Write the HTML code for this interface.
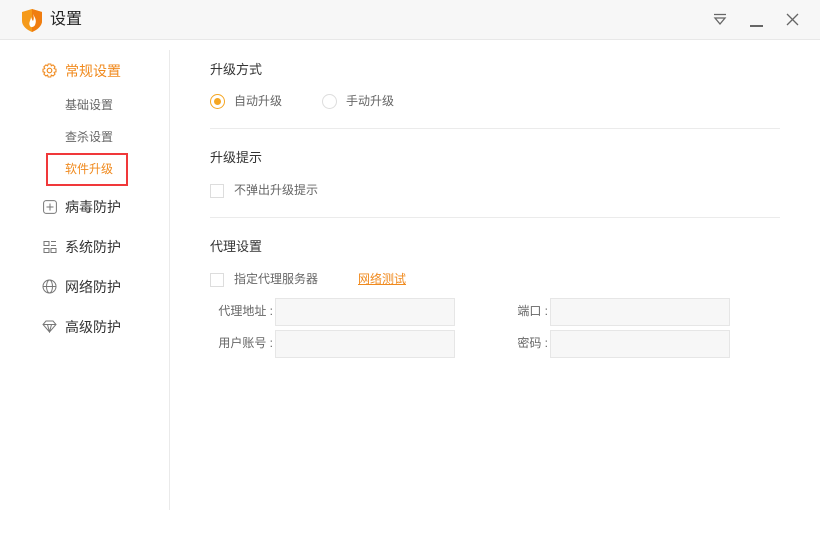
<!DOCTYPE html>
<html><head><meta charset="utf-8"><style>
*{margin:0;padding:0;box-sizing:border-box}
body{width:820px;height:540px;background:#fff;position:relative;overflow:hidden;font-family:"Liberation Sans","Noto Sans CJK SC",sans-serif;color:#333}
.a{position:absolute;white-space:nowrap}
.t{position:absolute;left:0;top:0;width:820px;height:40px;background:#f7f7f7;border-bottom:1px solid #e8e8e8}
.sub{font-size:12px;color:#666;left:65px;line-height:16px}
.nav{font-size:14px;color:#333;left:65px;line-height:18px}
.h{font-size:13px;color:#333;left:210px;line-height:18px}
.s{font-size:12px;color:#666;line-height:16px}
.hr{position:absolute;left:210px;width:570px;height:1px;background:#ebebeb}
.cb{position:absolute;width:14px;height:14px;border:1px solid #ddd;background:#fff}
.in{position:absolute;width:180px;height:28px;background:#f7f7f7;border:1px solid #e6e6e6}
.lb{font-size:12px;color:#666;line-height:16px;text-align:right}
</style></head><body>
<div class="t"></div>
<svg class="a" style="left:22px;top:9px" width="20" height="23" viewBox="0 0 20 23"><path d="M10 0L20 3V12C20 17 15 21 10 23C5 21 0 17 0 12V3Z" fill="#f59a1a"/><path d="M10 0L20 3V12C20 17 15 21 10 23Z" fill="#f07d10"/><path d="M11 5C13 9 15 11 13 16C12 18 9 19 8 17C6 14 9 11 9 8C10 10 10 11 11 12C12 10 12 8 11 5Z" fill="#fff"/></svg>
<div class="a" style="left:50px;top:10px;font-size:16px;line-height:20px;color:#222">设置</div>
<svg class="a" style="left:712px;top:13px" width="16" height="14" viewBox="0 0 16 14"><path d="M2 1.5H14M3 5H13L8 11Z" stroke="#666" stroke-width="1.3" fill="none"/></svg>
<div class="a" style="left:750px;top:25px;width:13px;height:1.5px;background:#666"></div>
<svg class="a" style="left:786px;top:13px" width="13" height="13" viewBox="0 0 13 13"><path d="M1 1L12 12M12 1L1 12" stroke="#666" stroke-width="1.3"/></svg>

<svg class="a" style="left:42px;top:63px" width="15" height="15" viewBox="0 0 15 15"><circle cx="7.5" cy="7.5" r="2.3" stroke="#f08a1e" stroke-width="1.2" fill="none"/><path d="M6.2 1H8.8L9.3 2.8L11 1.9L13 3.9L12.1 5.6L14 6.2V8.8L12.1 9.3L13 11.1L11.1 13L9.3 12.1L8.8 14H6.2L5.6 12.1L3.9 13L1.9 11.1L2.8 9.3L1 8.8V6.2L2.8 5.6L1.9 3.9L3.9 1.9L5.6 2.8Z" stroke="#f08a1e" stroke-width="1.1" fill="none"/></svg>
<div class="a nav" style="top:62px;color:#f08a1e">常规设置</div>
<div class="a sub" style="top:97px">基础设置</div>
<div class="a sub" style="top:129px">查杀设置</div>
<div class="a" style="left:46px;top:153px;width:82px;height:33px;border:2px solid #f0383a"></div>
<div class="a sub" style="top:161px;color:#f08a1e">软件升级</div>
<svg class="a" style="left:43px;top:200px" width="14" height="14" viewBox="0 0 14 14"><rect x="0.6" y="0.6" width="12.8" height="12.8" rx="2.5" stroke="#777" fill="none"/><path d="M7 3.5V10.5M3.5 7H10.5" stroke="#777"/></svg>
<div class="a nav" style="top:198px">病毒防护</div>
<svg class="a" style="left:43px;top:240px" width="14" height="14" viewBox="0 0 14 14"><path d="M1 1.5H6V5.5H1ZM8 1.5H13M8 5.5H13M1 8.5H6V12.5H1ZM8 8.5H13V12.5H8Z" stroke="#777" fill="none"/></svg>
<div class="a nav" style="top:238px">系统防护</div>
<svg class="a" style="left:42px;top:279px" width="15" height="15" viewBox="0 0 15 15"><circle cx="7.5" cy="7.5" r="6.5" stroke="#777" fill="none"/><ellipse cx="7.5" cy="7.5" rx="3" ry="6.5" stroke="#777" fill="none"/><path d="M1 7.5H14" stroke="#777"/></svg>
<div class="a nav" style="top:278px">网络防护</div>
<svg class="a" style="left:42px;top:320px" width="15" height="13" viewBox="0 0 15 13"><path d="M4 1H11L14 4.5L7.5 12L1 4.5ZM1 4.5H14M5.5 4.5L7.5 12L9.5 4.5" stroke="#777" fill="none"/></svg>
<div class="a nav" style="top:318px">高级防护</div>
<div class="a" style="left:169px;top:50px;width:1px;height:460px;background:#eaeaea"></div>

<div class="a h" style="top:61px">升级方式</div>
<div class="a" style="left:210px;top:94px;width:15px;height:15px;border-radius:50%;border:1.5px solid #f5a623"></div>
<div class="a" style="left:214px;top:98px;width:7px;height:7px;border-radius:50%;background:#f5a623"></div>
<div class="a s" style="left:234px;top:93px">自动升级</div>
<div class="a" style="left:322px;top:94px;width:15px;height:15px;border-radius:50%;border:1px solid #ddd"></div>
<div class="a s" style="left:346px;top:93px">手动升级</div>
<div class="hr" style="top:128px"></div>
<div class="a h" style="top:149px">升级提示</div>
<div class="cb" style="left:210px;top:184px"></div>
<div class="a s" style="left:234px;top:182px">不弹出升级提示</div>
<div class="hr" style="top:217px"></div>
<div class="a h" style="top:238px">代理设置</div>
<div class="cb" style="left:210px;top:273px"></div>
<div class="a s" style="left:234px;top:271px">指定代理服务器</div>
<div class="a s" style="left:358px;top:271px;color:#f08a1e;text-decoration:underline">网络测试</div>
<div class="a lb" style="left:200px;width:73px;top:303px">代理地址 :</div>
<div class="in" style="left:275px;top:298px"></div>
<div class="a lb" style="left:200px;width:73px;top:335px">用户账号 :</div>
<div class="in" style="left:275px;top:330px"></div>
<div class="a lb" style="left:490px;width:58px;top:303px">端口 :</div>
<div class="in" style="left:550px;top:298px"></div>
<div class="a lb" style="left:490px;width:58px;top:335px">密码 :</div>
<div class="in" style="left:550px;top:330px"></div>
</body></html>
